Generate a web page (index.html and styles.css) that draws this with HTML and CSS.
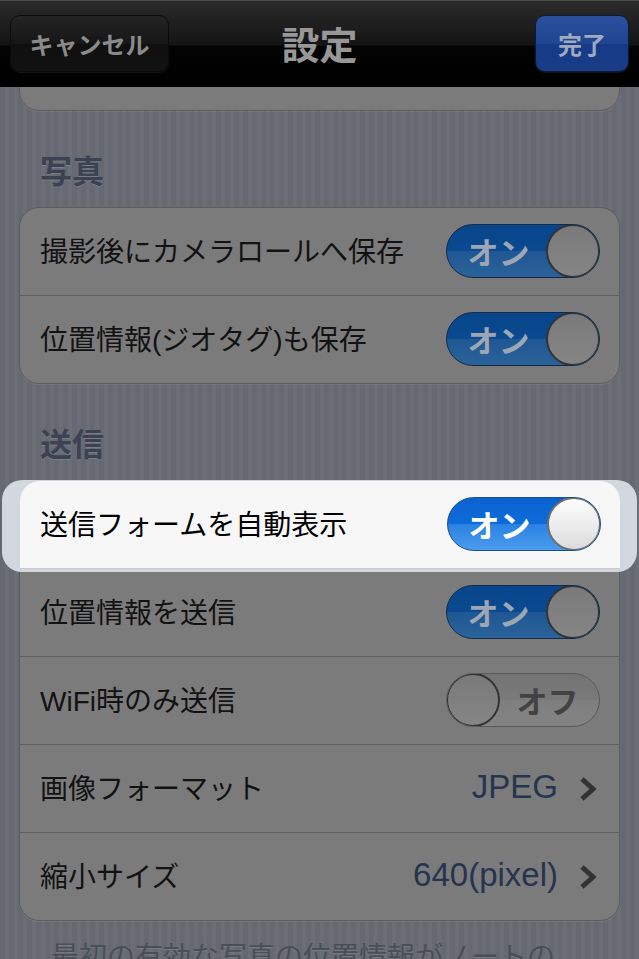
FILE: index.html
```html
<!DOCTYPE html>
<html lang="ja">
<head>
    <meta charset="UTF-8">
    <meta name="viewport" content="width=device-width, initial-scale=1.0">
    <title>設定</title>
    <link rel="stylesheet" href="styles.css">
</head>
<body>
    <div class="navbar">
        <div class="nav-btn cancel">キャンセル</div>
        <div class="nav-title">設定</div>
        <div class="nav-btn done">完了</div>
    </div>

    <div class="content">
        <div class="group top-group"></div>

        <div class="section-title">写真</div>
        <div class="group">
            <div class="row">
                <span class="label">撮影後にカメラロールへ保存</span>
                <div class="toggle on"><span class="toggle-text">オン</span><span class="knob"></span></div>
            </div>
            <div class="row last">
                <span class="label">位置情報(ジオタグ)も保存</span>
                <div class="toggle on"><span class="toggle-text">オン</span><span class="knob"></span></div>
            </div>
        </div>

        <div class="section-title">送信</div>
        <div class="group">
            <div class="halo">
                <div class="row active">
                    <span class="label">送信フォームを自動表示</span>
                    <div class="toggle on"><span class="toggle-text">オン</span><span class="knob"></span></div>
                </div>
            </div>
            <div class="row">
                <span class="label">位置情報を送信</span>
                <div class="toggle on"><span class="toggle-text">オン</span><span class="knob"></span></div>
            </div>
            <div class="row">
                <span class="label">WiFi時のみ送信</span>
                <div class="toggle off"><span class="knob"></span><span class="toggle-text">オフ</span></div>
            </div>
            <div class="row">
                <span class="label">画像フォーマット</span>
                <span class="value">JPEG</span>
                <svg class="chevron" width="20" height="26" viewBox="0 0 20 26"><polyline points="4,3 15,13 4,23" fill="none" stroke="#333" stroke-width="5" stroke-linejoin="miter"/></svg>
            </div>
            <div class="row last">
                <span class="label">縮小サイズ</span>
                <span class="value">640(pixel)</span>
                <svg class="chevron" width="20" height="26" viewBox="0 0 20 26"><polyline points="4,3 15,13 4,23" fill="none" stroke="#333" stroke-width="5" stroke-linejoin="miter"/></svg>
            </div>
        </div>

        <p class="footnote">最初の有効な写真の位置情報がノートの</p>
    </div>
</body>
</html>
```

FILE: styles.css
```css
body {
    margin: 0;
    width: 639px;
    height: 959px;
    overflow: hidden;
    font-family: "Liberation Sans", "Noto Sans CJK JP", sans-serif;
    background: repeating-linear-gradient(90deg, #666971 0, #666971 5px, #6b6e77 5px, #6b6e77 9px);
}

.navbar {
    height: 86px;
    border-top: 1px solid #4a4a4a;
    background: linear-gradient(#2a2a2a 0, #141414 44px, #030303 45px, #000 100%);
    display: grid;
    grid-template-columns: 1fr auto 1fr;
    align-items: center;
    padding: 0 10px;
    position: relative;
    z-index: 2;
}

.nav-btn {
    height: 55px;
    border-radius: 10px;
    display: flex;
    align-items: center;
    justify-content: center;
    font-weight: bold;
    font-size: 24px;
    margin-top: -2px;
}

.cancel {
    width: 157px;
    justify-self: start;
    border: 1px solid #0a0a0a;
    background: linear-gradient(#242424, #161616 50%, #0f0f0f 51%, #121212);
    color: #8a8a8a;
    box-shadow: 0 1px 0 rgba(255, 255, 255, 0.08);
}

.done {
    width: 92px;
    justify-self: end;
    border: 1px solid #0c1a3a;
    background: linear-gradient(#2a4f9c, #1f4490 50%, #163a86 51%, #193c88);
    color: #9fa9bf;
    box-shadow: 0 1px 0 rgba(255, 255, 255, 0.08);
}

.nav-title {
    font-size: 38px;
    font-weight: bold;
    color: #979797;
    margin-top: -4px;
}

.content {
    padding: 0 19px;
}

.group {
    background: #7b7b7b;
    border: 1px solid #5c5c5c;
    border-radius: 20px;
    box-shadow: 0 1px 0 rgba(255, 255, 255, 0.08);
}

.top-group {
    height: 42px;
    margin-top: -20px;
}

.section-title {
    height: 76px;
    padding: 20px 0 0 21px;
    display: flex;
    align-items: center;
    font-size: 32px;
    font-weight: bold;
    color: #3b4251;
    text-shadow: 0 1px 0 rgba(255, 255, 255, 0.12);
}

.row {
    height: 87px;
    border-bottom: 1px solid #5f5f5f;
    display: flex;
    align-items: center;
    padding: 0 19px 0 20px;
    color: #121212;
    font-size: 28px;
}

.row .label {
    flex: 1;
    margin-top: -3px;
}

.row.last {
    border-bottom: none;
}

.value {
    color: #27344f;
    font-size: 33px;
    margin-right: 20px;
    margin-top: -3px;
}

.chevron {
    margin-right: 2px;
}

.halo {
    position: relative;
    z-index: 1;
    margin: -1px -18px -3px;
    padding: 1px 17px 3px 18px;
    background: #d3d7df;
    border-radius: 20px;
}

.row.active {
    background: #f7f7f7;
    border-radius: 20px 20px 0 0;
    border-bottom: 1px solid #c8c8c8;
    color: #000;
}

.toggle {
    width: 154px;
    height: 54px;
    border-radius: 27px;
    box-sizing: border-box;
    display: flex;
    align-items: center;
    overflow: hidden;
    margin-top: -2px;
}

.toggle.on {
    background: linear-gradient(#08458b 0, #0b4a90 50%, #1f5794 51%, #2b6299 100%);
    border: 1px solid #132a48;
}

.toggle.off {
    background: linear-gradient(#737373 0, #7a7a7a 50%, #7f7f7f 51%, #838383 100%);
    border: 1px solid #5a5a5a;
}

.toggle-text {
    flex: 1;
    text-align: center;
    font-size: 31px;
    font-weight: bold;
}

.toggle.on .toggle-text {
    color: #9da6b4;
    padding-left: 4px;
}

.toggle.off .toggle-text {
    color: #424242;
    padding-right: 4px;
}

.knob {
    width: 54px;
    height: 54px;
    box-sizing: border-box;
    border-radius: 50%;
    border: 2px solid #333;
    background: linear-gradient(#7a7a7a, #858585);
    flex-shrink: 0;
}

.toggle.on .knob {
    margin-right: -1px;
}

.toggle.off .knob {
    margin-left: -1px;
}

.row.active .toggle.on {
    background: linear-gradient(#0a62cf 0, #0d6cda 50%, #2a82e2 51%, #4b9cee 100%);
    border: 1px solid #1a4f8e;
}

.row.active .toggle-text {
    color: #fff;
}

.row.active .knob {
    border: 2px solid #6d6d6d;
    background: linear-gradient(#fdfdfd, #dcdcdc);
}

.footnote {
    margin: 14px 0 0;
    padding-left: 32px;
    font-size: 28px;
    color: #494e57;
    text-shadow: 0 1px 0 rgba(255, 255, 255, 0.1);
    white-space: nowrap;
}
```
